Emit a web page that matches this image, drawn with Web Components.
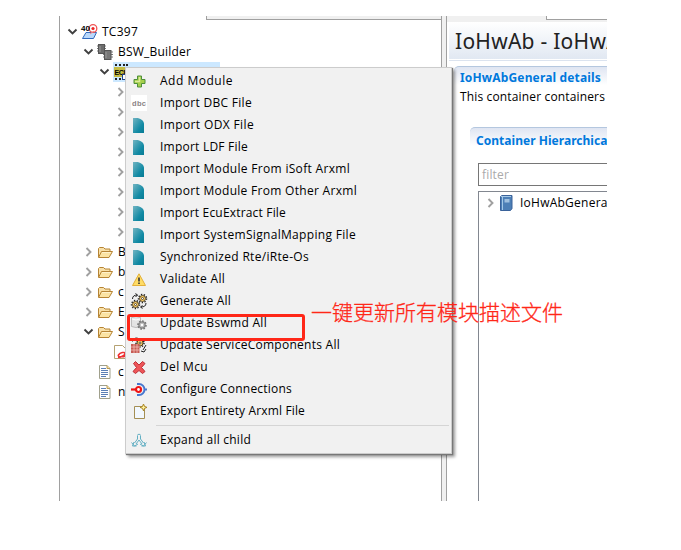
<!DOCTYPE html>
<html lang="zh"><head><meta charset="utf-8"><title>BSW Builder</title>
<style>
html,body{margin:0;background:#fff}
body{width:681px;height:550px;overflow:hidden;position:relative;font:12px/20px "Open Sans","Noto Sans CJK SC",sans-serif;color:#000}
</style></head><body>
<ide-window></ide-window>
<script>
const folder='<path d="M1.500 13V4.500l1-1h4l1.500 1.500h5v2" fill="#f8e0a8" stroke="#b68434"/><path d="M1.500 13.500L4.500 7.500h11l-3.500 6z" fill="#fbe3a3" stroke="#b68434"/><path d="M5 8.500h9" stroke="#fff2cc"/>';
const gear=(x,y,r)=>`<circle cx="${x}" cy="${y}" r="${r}" fill="none" stroke="#222" stroke-width="1.500" stroke-dasharray="1.300 1.500"/><circle cx="${x}" cy="${y}" r="${r-1}" fill="#f8cb66" stroke="#4a3a18" stroke-width=".9"/><circle cx="${x}" cy="${y}" r="1" fill="#fff" stroke="#222" stroke-width=".7"/>`;
const ICONS={
open:'<path d="M4.500 5.500l4 4 4-4" fill="none" stroke="#404040" stroke-width="1.900"/>',
closed:'<path d="M6.500 4l4 4-4 4" fill="none" stroke="#a0a0a0" stroke-width="1.900"/>',
folder,
project:'<path d="M1.500 14.500L5 8.500h10.500l-3 6z" fill="#b9d8fb" stroke="#3169bd"/><circle cx="12" cy="4.500" r="3.800" fill="#fff" stroke="#ef5555" stroke-width="1.300"/><circle cx="12" cy="4.500" r="1.600" fill="#e22"/><path d="M9 10l4-3" stroke="#ef8888"/><text x="0" y="7" font-family="Liberation Sans" font-weight="bold" font-size="8" textLength="9">40</text>',
chips:'<path d="M0 2h9M0 4.500h9M0 7h9M6 8h10M6 10.500h10M6 13h10" stroke="#777"/><rect x="1.500" y=".5" width="6" height="9" fill="#6c6c6c" stroke="#555"/><rect x="7.500" y="6.500" width="6.500" height="9" fill="#777" stroke="#555"/><path d="M3 2v6M9 8v6" stroke="#999"/>',
ecu:'<path d="M3 0v16M7 0v16M11 0v16M14 0v16" stroke="#222" stroke-width="2" stroke-dasharray="2 12"/><rect x="1" y="3" width="15" height="10" fill="#c6bc45"/><text x="1.500" y="10.500" font-family="Liberation Sans" font-weight="bold" font-size="7" textLength="14">ECU</text><rect x="9.500" y="10.500" width="6" height="5" fill="#fff" stroke="#248"/>',
doc:'<path d="M2.500 1.500h7.500l3 3v10h-10.500z" fill="#fff" stroke="#a0a08c"/><path d="M10 1.500v3h3" fill="#f6df9e" stroke="#b89a55"/><path d="M4 4.500h5M4 6.500h7M4 8.500h7M4 10.500h7M4 12.500h5" stroke="#5b7fb5"/>',
pdf:'<path d="M1.500 1.500h8l3 3v10h-11z" fill="#fff" stroke="#b5a272"/><path d="M5 13.500c2 0 7-2 7-4s-5-1-6.500 1.500 5 2 7 1" fill="none" stroke="#e33" stroke-width="1.600"/>',
plus:'<path d="M6.500 3h4v3.500h3.500v4h-3.500v3.500h-4v-3.500h-3.500v-4h3.500z" fill="#a5cf4b" stroke="#4e8f3a"/><path d="M8.500 4v4.500H4" fill="none" stroke="#dceb9a" stroke-width="1.500"/>',
dbc:'<rect width="16" height="16" fill="#fff"/><text x="1" y="11" font-family="Liberation Sans" font-weight="bold" font-size="7.500" textLength="14" fill="#8b8384">dbc</text>',
leaf:'<defs><linearGradient id="g" x1="0" y1="0" x2="1" y2="1"><stop stop-color="#72b4c2"/><stop offset=".65" stop-color="#128aa4"/><stop offset="1" stop-color="#087b94"/></linearGradient></defs><path d="M2 1H5.500C9 1 13 3.500 13 7v9H2z" fill="url(#g)"/>',
warn:'<path d="M8 2.800L1.500 14.500h13z" fill="#ffdc65" stroke="#e3b03a" stroke-linejoin="round"/><path d="M8 6.500v4M8 11.500v1.600" stroke="#333" stroke-width="1.600"/>',
gears:gear(11.500,5.500,4)+gear(4.500,11.500,4)+'<path d="M1.500 6c0-3 2-4 5-4M4.500 .5l2 1.500L4.500 4M15 10c0 3-2 4-5 4M11.500 12.500l-2 1.500 2 1.500" fill="none" stroke="#222"/>',
update:'<path d="M.5 2.500q4.500-2 9 0v9q-4.500 2-9 0z" fill="#e4e4e4" stroke="#bbb"/><path d="M1 4q4 2 8 0" stroke="#fff" fill="none"/><circle cx="11" cy="10" r="3.900" fill="#aaa" stroke="#777" stroke-width="1.800" stroke-dasharray="1.600 1.400"/><circle cx="11" cy="10" r="3" fill="#bbb" stroke="#888"/><circle cx="11" cy="10" r="1.300" fill="#fff"/>',
service:gear(9,6,4)+'<path d="M1.500 4.500c0-2.500 2-3.500 5-3.500M15 8l-3 5M10 14l3 1 2-3" stroke="#222" fill="none"/><rect x="0" y="7" width="8.500" height="9" fill="#c65c55"/><path d="M0 10h9M0 13h9M3 7v9M6 7v9" stroke="#f2bbb4" stroke-width=".8"/>',
del:'<path d="M2.500 4.500l2-2L8 6l3.500-3.500 2.500 2-3.500 4 3.500 4-2.500 2L8 11.500l-3.500 3L2 12.500l3.500-4z" fill="#ee5558" stroke="#bd3038"/>',
conn:'<path d="M6 3h2a5.500 5.500 0 0 1 0 11H6M13 8.500H16" fill="none" stroke="#4776cf" stroke-width="2"/><path d="M0 8.500H5" stroke="#f01414" stroke-width="2.200"/><circle cx="7.500" cy="8.500" r="2.500" fill="#fff" stroke="#f01414" stroke-width="2.200"/>',
export:'<path d="M3.500 3.500h10v12h-10z" fill="#f2f8ff" stroke="#a48f55"/><path d="M12.500 1l1 2.400 2.500 1-2.500 1-1 2.500-1-2.500-2.500-1 2.500-1z" fill="#fff3a0" stroke="#a98423"/>',
expand:'<path d="M6.500 4v3l-3 4M9.500 4v3l3 4M8 8l-3 4M8 8l3 4M.5 10.500L3.500 14 7 12M15.500 10.500L12.500 14 9 12M3 10l-1.500 4h4M13 10l1.500 4h-4M6 3.500L8 2l2 1.500" fill="none" stroke="#62afc3"/>',
book:'<path d="M1.500 1.500L3 .5h10v13l-1.500 2h-10z" fill="#4d7fb6" stroke="#3a629a"/><path d="M3.500 2v13" stroke="#a5c9e8"/><rect x="5.500" y="4" width="5" height="3.500" fill="#9fc0df"/><path d="M2 1.500h10" stroke="#a5c9e8"/>'
};
class UiIcon extends HTMLElement{connectedCallback(){this.attachShadow({mode:'open'}).innerHTML=`<style>:host{display:block;width:16px;height:16px;flex:none}svg{display:block;overflow:visible}</style><svg width="16" height="16" viewBox="0 0 16 16">${ICONS[this.getAttribute('name')]}</svg>`}}
customElements.define('ui-icon',UiIcon);

/* A single-line label whose tracking is adjusted to its `w` attribute. */
class FitText extends HTMLElement{connectedCallback(){
 this.attachShadow({mode:'open'}).innerHTML='<style>:host{display:block;white-space:pre;flex:none}span{display:inline-block}</style><span><slot></slot></span>';
 const w=+this.getAttribute('w'),s=this.shadowRoot.querySelector('span');
 if(w)s.style.letterSpacing=((w-s.getBoundingClientRect().width)/this.textContent.length)+'px';
}}
customElements.define('fit-text',FitText);

class TreeRow extends HTMLElement{connectedCallback(){
 const a=n=>this.getAttribute(n),d=+a('depth');
 this.attachShadow({mode:'open'}).innerHTML=`<style>:host{display:flex;height:20px;align-items:center;padding-left:${4+d*16}px;box-sizing:border-box}
 .c{width:16px;height:16px;flex:none;margin-right:1px}.b{display:flex;align-items:center;gap:5px;height:20px}.sel{background:#cce8ff;width:107px}</style>
 <div class="c">${a('state')?`<ui-icon name="${a('state')}"></ui-icon>`:''}</div><div class="b ${this.hasAttribute('selected')?'sel':''}">${a('icon')?`<ui-icon name="${a('icon')}"></ui-icon>`:''}${a('label')?`<fit-text w="${a('w')||''}">${a('label')}</fit-text>`:''}</div>`}}
customElements.define('tree-row',TreeRow);

class MenuItem extends HTMLElement{connectedCallback(){
 this.attachShadow({mode:'open'}).innerHTML=`<style>:host{display:flex;height:22px;align-items:center;padding-left:3px;gap:13px}ui-icon{margin-top:-1px}</style><ui-icon name="${this.getAttribute('icon')}"></ui-icon><fit-text w="${this.getAttribute('w')}">${this.textContent}</fit-text>`}}
customElements.define('menu-item',MenuItem);

class ContextMenu extends HTMLElement{connectedCallback(){
 this.attachShadow({mode:'open'}).innerHTML=`<style>:host{display:block;box-sizing:border-box;width:327px;height:387px;padding:2px 2px;border:1px solid #ccc;background:#f1f1f1;box-shadow:1px 1px 1px #777,3px 3px 3px #0006}hr{border:0;height:1px;margin:3px 0 3px 28px;background:#d5d5d5}</style>`+
 [['plus','Add Module',73],['dbc','Import DBC File',92],['leaf','Import ODX File',94],['leaf','Import LDF File',88],['leaf','Import Module From iSoft Arxml',190],['leaf','Import Module From Other Arxml',197],['leaf','Import EcuExtract File',126],['leaf','Import SystemSignalMapping File',196],['leaf','Synchronized Rte/iRte-Os',149],['warn','Validate All',65],['gears','Generate All',71],['update','Update Bswmd All',107],['service','Update ServiceComponents All',180],['del','Del Mcu',48],['conn','Configure Connections',132],['export','Export Entirety Arxml File',145],['expand','Expand all child',91]]
 .map((m,i)=>(i==16?'<hr>':'')+`<menu-item icon="${m[0]}" w="${m[2]}">${m[1]}</menu-item>`).join('')}}
customElements.define('context-menu',ContextMenu);

class ProjectTree extends HTMLElement{connectedCallback(){
 let r='<tree-row depth="0" state="open" icon="project" label="TC397" w="36"></tree-row><tree-row depth="1" state="open" icon="chips" label="BSW_Builder" w="73"></tree-row><tree-row depth="2" state="open" icon="ecu" selected></tree-row>';
 r+='<tree-row depth="3" state="closed"></tree-row>'.repeat(8);
 for(const l of 'BbcES')r+=`<tree-row depth="1" state="${l=='S'?'open':'closed'}" icon="folder" label="${l}"></tree-row>`;
 r+='<tree-row depth="2" icon="pdf"></tree-row><tree-row depth="1" icon="doc" label="c"></tree-row><tree-row depth="1" icon="doc" label="n"></tree-row>';
 this.attachShadow({mode:'open'}).innerHTML=`<style>:host{display:block;box-sizing:border-box;width:383px;height:485px;border:solid #a0a0a0;border-width:0 1px;background:#fff}
 .tab{height:4px;box-sizing:border-box;margin-left:146px;background:#f0f0f0;border-left:1px solid #a0a0a0;border-bottom:1px solid #a0a0a0}.rows{padding-top:2px}</style><div class="tab"></div><div class="rows">${r}</div>`}}
customElements.define('project-tree',ProjectTree);

class DetailsSection extends HTMLElement{connectedCallback(){
 this.attachShadow({mode:'open'}).innerHTML=`<style>:host{display:block;overflow:hidden}.t{height:20px;box-sizing:border-box;border-top:1px solid #b4c7df;border-radius:5px 0 0;background:linear-gradient(#dfe5f2,#fff 95%);padding:var(--title-drop,0) 0 0 6px;color:#0078dc;font:bold 12px/20px "Noto Sans",sans-serif}</style><div class="t"><fit-text w="${this.getAttribute('w')}">${this.getAttribute('heading')}</fit-text></div><slot></slot>`}}
customElements.define('details-section',DetailsSection);

class DetailsEditor extends HTMLElement{connectedCallback(){
 this.attachShadow({mode:'open'}).innerHTML=`<style>:host{display:block;width:160px;height:485px;overflow:hidden;background:#fff}
 .tab{height:6px;background:#f0f0f0;display:flex;justify-content:flex-end}.tab i{width:60px;height:3px;background:#fff;border:solid #a0a0a0;border-width:0 0 1px 1px}
 .head{margin-left:2px;height:37px;padding-left:6px;background:linear-gradient(#fff,#e1e8f2);font:21px/39px "Noto Sans",sans-serif;color:#222;overflow:hidden}
 .line{margin:1px 0 5px 2px;height:1px;background:#dbe3ef}
 .outer{margin-left:7px;--title-drop:1px}p{margin:0;padding:1px 0 0 6px;height:20px}.inner{margin:20px 0 0 16px;--title-drop:3px}
 .filter{box-sizing:border-box;height:23px;margin:16px 0 5px 8px;border:1px solid #767676;border-right:0;padding-left:3px;line-height:21px;color:#aaa}
 .list{box-sizing:border-box;height:310px;margin-left:8px;border:1px solid #828790;border-width:1px 0 0 1px;padding-top:1px;overflow:hidden}.list tree-row{margin-left:-1px}</style>
 <div class="tab"><i></i></div><div class="head"><fit-text w="178">IoHwAb - IoHwAb</fit-text></div><div class="line"></div>
 <details-section class="outer" heading="IoHwAbGeneral details" w="141"><p><fit-text w="145">This container containers</fit-text></p>
 <details-section class="inner" heading="Container Hierarchical" w="135"><div class="filter"><fit-text w="27">filter</fit-text></div><div class="list"><tree-row depth="0" state="closed" icon="book" label="IoHwAbGeneral" w="91"></tree-row></div></details-section></details-section>`}}
customElements.define('details-editor',DetailsEditor);

class IdeWindow extends HTMLElement{connectedCallback(){
 this.attachShadow({mode:'open'}).innerHTML=`<style>:host{display:block;width:681px;height:550px}
 .main{display:flex;padding:16px 0 0 59px}.sash{width:4px;height:485px;background:#f0f0f0;border-right:1px solid #a0a0a0}
 context-menu{position:absolute;left:125px;top:67px}.mark{position:absolute;left:127px;top:314px;width:172px;height:21px;border:3px solid #ff2718;border-radius:3px}
 .note{position:absolute;left:311px;top:295px;font:21px/32px "Noto Sans CJK SC",sans-serif;font-weight:300;color:#ff2718;-webkit-text-stroke:.3px #ff2718}</style>
 <div class="main"><project-tree></project-tree><div class="sash"></div><details-editor></details-editor></div><context-menu></context-menu><div class="mark"></div><div class="note">一键更新所有模块描述文件</div>`}}
customElements.define('ide-window',IdeWindow);
</script></body></html>
